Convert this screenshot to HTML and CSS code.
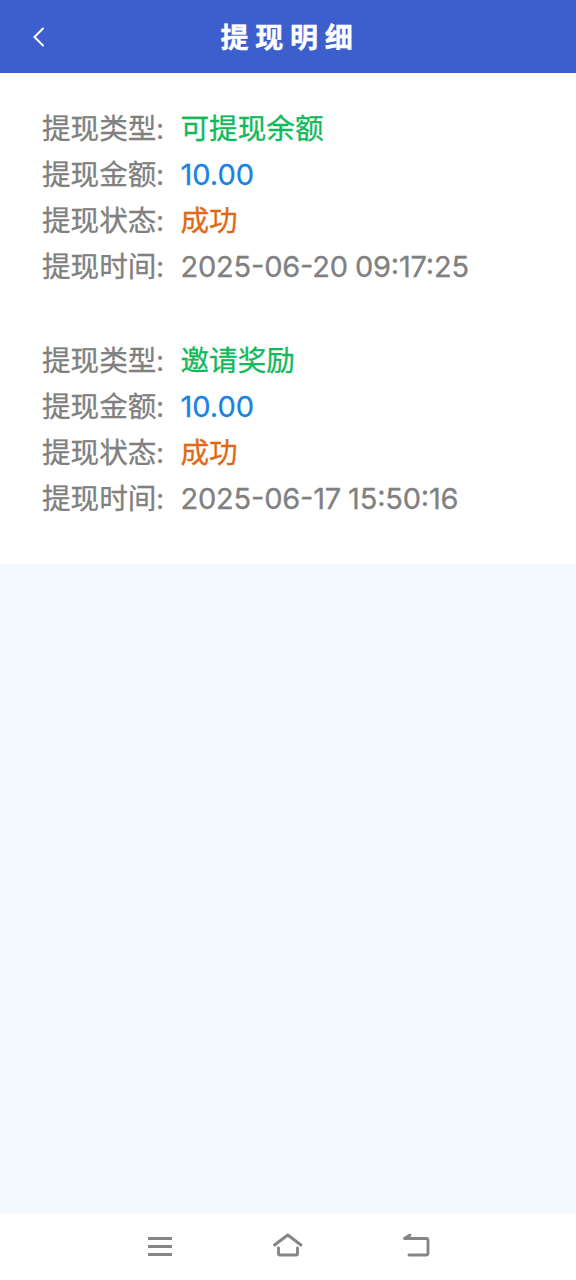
FILE: index.html
```html
<!DOCTYPE html>
<html lang="zh-CN">
<head>
<meta charset="utf-8">
<title>提现明细</title>
<link rel="stylesheet" href="styles.css">
</head>
<body>
<header class="header">
  <svg class="back" viewBox="0 0 14 22"><path d="M11 2.500 2.500 11l8.500 8.500"/></svg>
  <h1 class="title">提现明细</h1>
</header>
<main class="content">
  <section class="list">
    <dl class="record">
      <div class="row"><dt class="label">提现类型:</dt><dd class="value green">可提现余额</dd></div>
      <div class="row"><dt class="label">提现金额:</dt><dd class="value num blue">10.00</dd></div>
      <div class="row"><dt class="label">提现状态:</dt><dd class="value orange">成功</dd></div>
      <div class="row"><dt class="label">提现时间:</dt><dd class="value num time">2025-06-20 09:17:25</dd></div>
    </dl>
    <dl class="record">
      <div class="row"><dt class="label">提现类型:</dt><dd class="value green">邀请奖励</dd></div>
      <div class="row"><dt class="label">提现金额:</dt><dd class="value num blue">10.00</dd></div>
      <div class="row"><dt class="label">提现状态:</dt><dd class="value orange">成功</dd></div>
      <div class="row"><dt class="label">提现时间:</dt><dd class="value num time">2025-06-17 15:50:16</dd></div>
    </dl>
  </section>
</main>
<nav class="navbar">
  <svg class="nav-icon" viewBox="0 0 32 32"><path class="flat" d="M4 7.500H28M4 15.500H28M4 23.500H28"/></svg>
  <svg class="nav-icon" viewBox="0 0 32 32"><path d="M2.500 14 15.800 4 29 14M6.500 17v6q0 1 1 1h17q1 0 1-1v-6"/></svg>
  <svg class="nav-icon" viewBox="0 0 32 32"><path d="M10 4 4.500 7.500H26q2 0 2 2v12.500q0 2-2 2H9"/><path class="tip" d="M9.500 4.500 4.500 7.500h5z"/></svg>
</nav>
</body>
</html>
```
FILE: styles.css
```css
* { box-sizing: border-box; margin: 0; padding: 0; }
body {
  height: 1280px;
  display: flex;
  flex-direction: column;
  background: #f4f8ff;
  font-family: Lato, "Noto Sans CJK SC", sans-serif;
  color: #808080;
}
.header {
  height: 72.5px;
  padding-top: 1.5px;
  display: grid;
  grid-template-columns: 80px 1fr 80px;
  align-items: center;
  background: #3d5fcd;
  color: #fff;
}
.back { width: 14px; height: 22px; margin-left: 32px; fill: none; stroke: #fff; stroke-width: 2; stroke-linecap: round; }
.title { font-size: 28px; line-height: 40px; letter-spacing: 6.7px; padding-left: 4px; text-align: center; font-weight: 700; -webkit-text-stroke: 0.4px; }
.content { flex: 1; }
.list { height: 491.5px; background: #fff; padding: 32px 42px; }
.record { margin-bottom: 48.4px; }
.row { display: flex; height: 46px; line-height: 46px; font-size: 28.6px; white-space: nowrap; -webkit-text-stroke: 0.3px; }
.label { width: 138.5px; }
.num { font-family: Inter, sans-serif; font-size: 29px; line-height: 47px; }
.time { letter-spacing: -0.2px; word-spacing: -0.8px; font-feature-settings: "case" 1; }
.green { color: #12b95b; }
.blue { color: #1a82e2; }
.orange { color: #df6917; }
.navbar { height: 67px; display: flex; justify-content: center; align-items: center; gap: 96px; background: #fff; }
.nav-icon { width: 32px; height: 32px; fill: none; stroke: #858585; stroke-width: 2.9; stroke-linecap: round; stroke-linejoin: round; }
.flat { stroke-linecap: butt; }
.tip { fill: #858585; stroke-width: 1; }
```
